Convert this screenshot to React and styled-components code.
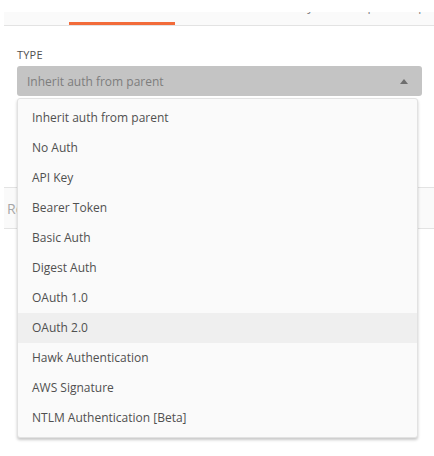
import React from "react";
import styled, { createGlobalStyle } from "styled-components";

const GlobalStyle = createGlobalStyle`
  body {
    margin: 0;
    background: #ffffff;
    font-family: "Open Sans", "Liberation Sans", sans-serif;
  }
`;

const Page = styled.div`
  position: relative;
  width: 434px;
  height: 456px;
  padding-left: 4px;
  padding-top: 12px;
  box-sizing: border-box;
  overflow: hidden;
`;

const TabBar = styled.div`
  display: flex;
  height: 13px;
  background: #fafafa;
  border-bottom: 1px solid #e3e3e3;
  overflow: hidden;
`;

const Tab = styled.div`
  position: relative;
  flex: none;
  width: ${(p) => p.w}px;
  height: 100%;
  ${(p) =>
    p.active &&
    `
    &::after {
      content: "";
      position: absolute;
      left: 0;
      right: 0;
      bottom: 0;
      height: 3px;
      background: #f26b3a;
    }
  `}
`;

/* only the descenders of the tab names reach into the visible strip */
const TabLabel = styled.span`
  position: absolute;
  top: -11px;
  left: ${(p) => p.pad || 0}px;
  font-size: 12px;
  line-height: 12px;
  color: #808080;
  white-space: nowrap;
`;

const Form = styled.div`
  padding: 22px 12px 0 13px;
`;

const Label = styled.div`
  font-size: 11px;
  color: #505050;
  line-height: 14px;
  margin-bottom: 4px;
  letter-spacing: 0.2px;
`;

const Select = styled.div`
  display: flex;
  align-items: center;
  justify-content: space-between;
  height: 30px;
  padding: 0 14px 0 10px;
  background: #c4c4c4;
  border-radius: 3px;
  font-size: 12px;
  color: #7d7d7d;
`;

const Caret = styled.span`
  width: 0;
  height: 0;
  border-left: 4px solid transparent;
  border-right: 4px solid transparent;
  border-bottom: 5px solid #6e6e6e;
`;

const Menu = styled.ul`
  position: absolute;
  top: 98px;
  left: 17px;
  width: 401px;
  margin: 0;
  padding: 4px 0;
  list-style: none;
  box-sizing: border-box;
  background: #fafafa;
  border: 1px solid #e2e2e2;
  border-radius: 3px;
  box-shadow: 0 2px 3px rgba(0, 0, 0, 0.22);
  z-index: 2;
`;

const Item = styled.li`
  height: 30px;
  line-height: 30px;
  padding-left: 14px;
  font-size: 12px;
  color: #505050;
  background: ${(p) => (p.hover ? "#efefef" : "transparent")};
`;

const ResponseBar = styled.div`
  margin-top: 91px;
  height: 40px;
  display: flex;
  align-items: center;
  padding-left: 3px;
  background: #fafafa;
  border-top: 1px solid #e3e3e3;
  border-bottom: 1px solid #e3e3e3;
  font-size: 14px;
  color: #a6a6a6;
`;

const tabs = [
  { name: "Params", w: 65, pad: 10 },
  { name: "Authorization", w: 106, pad: 14, active: true },
  { name: "Headers", w: 90, pad: 14 },
  { name: "Body", w: 64, pad: 20 },
  { name: "Pre-request Script", w: 105, pad: 0 },
];

const authTypes = [
  "Inherit auth from parent",
  "No Auth",
  "API Key",
  "Bearer Token",
  "Basic Auth",
  "Digest Auth",
  "OAuth 1.0",
  "OAuth 2.0",
  "Hawk Authentication",
  "AWS Signature",
  "NTLM Authentication [Beta]",
];

const App = () => {
  return (
    <Page>
      <GlobalStyle />
      <TabBar>
        {tabs.map((t) => (
          <Tab key={t.name} w={t.w} active={t.active}>
            <TabLabel pad={t.pad}>{t.name}</TabLabel>
          </Tab>
        ))}
      </TabBar>
      <Form>
        <Label>TYPE</Label>
        <Select>
          Inherit auth from parent
          <Caret />
        </Select>
      </Form>
      <ResponseBar>Response</ResponseBar>
      <Menu>
        {authTypes.map((t) => (
          <Item key={t} hover={t === "OAuth 2.0"}>
            {t}
          </Item>
        ))}
      </Menu>
    </Page>
  );
};

export default App;
